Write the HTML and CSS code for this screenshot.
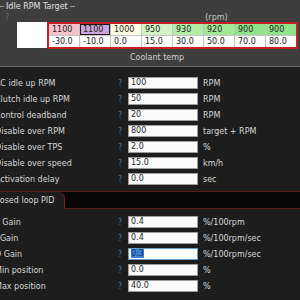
FILE: index.html
```html
<!DOCTYPE html>
<html lang="en">
<head>
    <meta charset="UTF-8">
    <title>Idle settings</title>
    <link rel="stylesheet" href="styles.css">
</head>
<body>
    <div class="target-panel">
        <div class="legend">
            <span class="legend-line lead"></span>
            <span class="legend-text">Idle RPM Target</span>
            <span class="legend-line tail"></span>
        </div>
        <div class="table-head">
            <span class="help dim">?</span>
            <span class="axis-unit">(rpm)</span>
        </div>
        <div class="table-wrap">
            <div class="corner-cell"></div>
            <div class="curve">
                <div class="cell c1">1100</div>
                <div class="cell c2">1100</div>
                <div class="cell c3">1000</div>
                <div class="cell c4">950</div>
                <div class="cell c5">930</div>
                <div class="cell c6">920</div>
                <div class="cell c7">900</div>
                <div class="cell c7">900</div>
                <div class="cell">-30.0</div>
                <div class="cell">-10.0</div>
                <div class="cell">0.0</div>
                <div class="cell">15.0</div>
                <div class="cell">30.0</div>
                <div class="cell">50.0</div>
                <div class="cell">70.0</div>
                <div class="cell">80.0</div>
            </div>
        </div>
        <div class="axis-caption">Coolant temp</div>
    </div>

    <div class="form-block">
        <div class="form-row"><span class="label">AC idle up RPM</span><span class="help">?</span><span class="field">100</span><span class="unit">RPM</span></div>
        <div class="form-row"><span class="label">Clutch idle up RPM</span><span class="help">?</span><span class="field">50</span><span class="unit">RPM</span></div>
        <div class="form-row"><span class="label">Control deadband</span><span class="help">?</span><span class="field">20</span><span class="unit">RPM</span></div>
        <div class="form-row"><span class="label">Disable over RPM</span><span class="help">?</span><span class="field">800</span><span class="unit">target + RPM</span></div>
        <div class="form-row"><span class="label">Disable over TPS</span><span class="help">?</span><span class="field">2.0</span><span class="unit">%</span></div>
        <div class="form-row"><span class="label">Disable over speed</span><span class="help">?</span><span class="field">15.0</span><span class="unit">km/h</span></div>
        <div class="form-row"><span class="label">Activation delay</span><span class="help">?</span><span class="field">0.0</span><span class="unit">sec</span></div>
    </div>

    <div class="tab-strip">
        <div class="tab">Closed loop PID</div>
    </div>

    <div class="form-block pid">
        <div class="form-row"><span class="label">P Gain</span><span class="help">?</span><span class="field">0.4</span><span class="unit">%/100rpm</span></div>
        <div class="form-row"><span class="label">I Gain</span><span class="help">?</span><span class="field">0.4</span><span class="unit">%/100rpm/sec</span></div>
        <div class="form-row"><span class="label">D Gain</span><span class="help">?</span><span class="field focused"><span class="selected">0.3</span></span><span class="unit">%/100rpm/sec</span></div>
        <div class="form-row"><span class="label">Min position</span><span class="help">?</span><span class="field">0.0</span><span class="unit">%</span></div>
        <div class="form-row"><span class="label">Max position</span><span class="help">?</span><span class="field">40.0</span><span class="unit">%</span></div>
    </div>
</body>
</html>
```

FILE: styles.css
```css
/* Base */
body {
    margin: 0;
    background-color: #1d1d1d;
    color: #d8d8d8;
    font-family: 'DejaVu Sans', sans-serif;
    font-size: 8px;
    overflow: hidden;
}

/* Idle RPM target panel */
.target-panel {
    background-color: #3e3e3e;
    height: 66px;
    border-bottom: 1px solid #6a6a6a;
}

.legend {
    display: flex;
    align-items: center;
    height: 13px;
}

.legend-line {
    height: 1px;
    background-color: #9a9a9a;
}

.legend-line.lead {
    width: 4px;
}

.legend-line.tail {
    width: 5px;
}

.legend-text {
    padding: 0 2px;
    color: #e0e0e0;
}

.table-head {
    display: flex;
    align-items: center;
    height: 9px;
}

.table-head .help {
    margin-left: 5px;
}

.axis-unit {
    margin-left: 196px;
    color: #c8c8c8;
}

.table-wrap {
    display: flex;
    margin-left: 17px;
}

.corner-cell {
    width: 30px;
    height: 26px;
    background-color: #fff;
}

.curve {
    display: grid;
    grid-template-columns: repeat(8, 1fr);
    grid-auto-rows: 11px;
    gap: 1px;
    width: 247px;
    border: 2px solid #c81f26;
    background-color: #c4c4c4;
}

.cell {
    background-color: #fff;
    color: #222;
    padding-left: 3px;
    line-height: 11px;
}

.c1 { background-color: #f6c3cb; }
.c2 { background-color: #c9a6dd; outline: 1px solid #1a1a1a; outline-offset: -1px; }
.c3 { background-color: #fdfde0; }
.c4 { background-color: #d4f3c4; }
.c5 { background-color: #b3eca7; }
.c6 { background-color: #a2e898; }
.c7 { background-color: #8fe38a; }

.axis-caption {
    margin-top: 4px;
    text-align: center;
    padding-left: 14px;
    color: #d0d0d0;
}

/* Form rows */
.form-block {
    padding-top: 8px;
}

.form-block.pid {
    padding-top: 5px;
}

.form-row {
    display: grid;
    grid-template-columns: 123px 10px 70px 1fr;
    align-items: center;
    height: 16px;
    margin-left: -5px;
}

.help {
    color: #3a7fa3;
}

.help.dim {
    color: #6c6c6c;
}

.field {
    box-sizing: border-box;
    height: 12px;
    line-height: 10px;
    padding-left: 2px;
    background-color: #fbfbfb;
    border: 1px solid #9d9d9d;
    color: #222;
}

.field.focused {
    border-color: #6a9cc8;
}

.selected {
    background-color: #3f7fd0;
    color: #0e2f70;
}

.unit {
    padding-left: 5px;
}

/* Section tab */
.tab-strip {
    margin-top: 4px;
    height: 16px;
    background-color: #060606;
    border-top: 1px solid #5e1818;
    border-bottom: 1px solid #5e1818;
}

.tab {
    box-sizing: border-box;
    width: 85px;
    height: 17px;
    margin-left: -20px;
    padding-left: 12px;
    line-height: 17px;
    background-color: #1d1d1d;
    border-right: 1px solid #7a2020;
    border-top-right-radius: 6px;
}
```
